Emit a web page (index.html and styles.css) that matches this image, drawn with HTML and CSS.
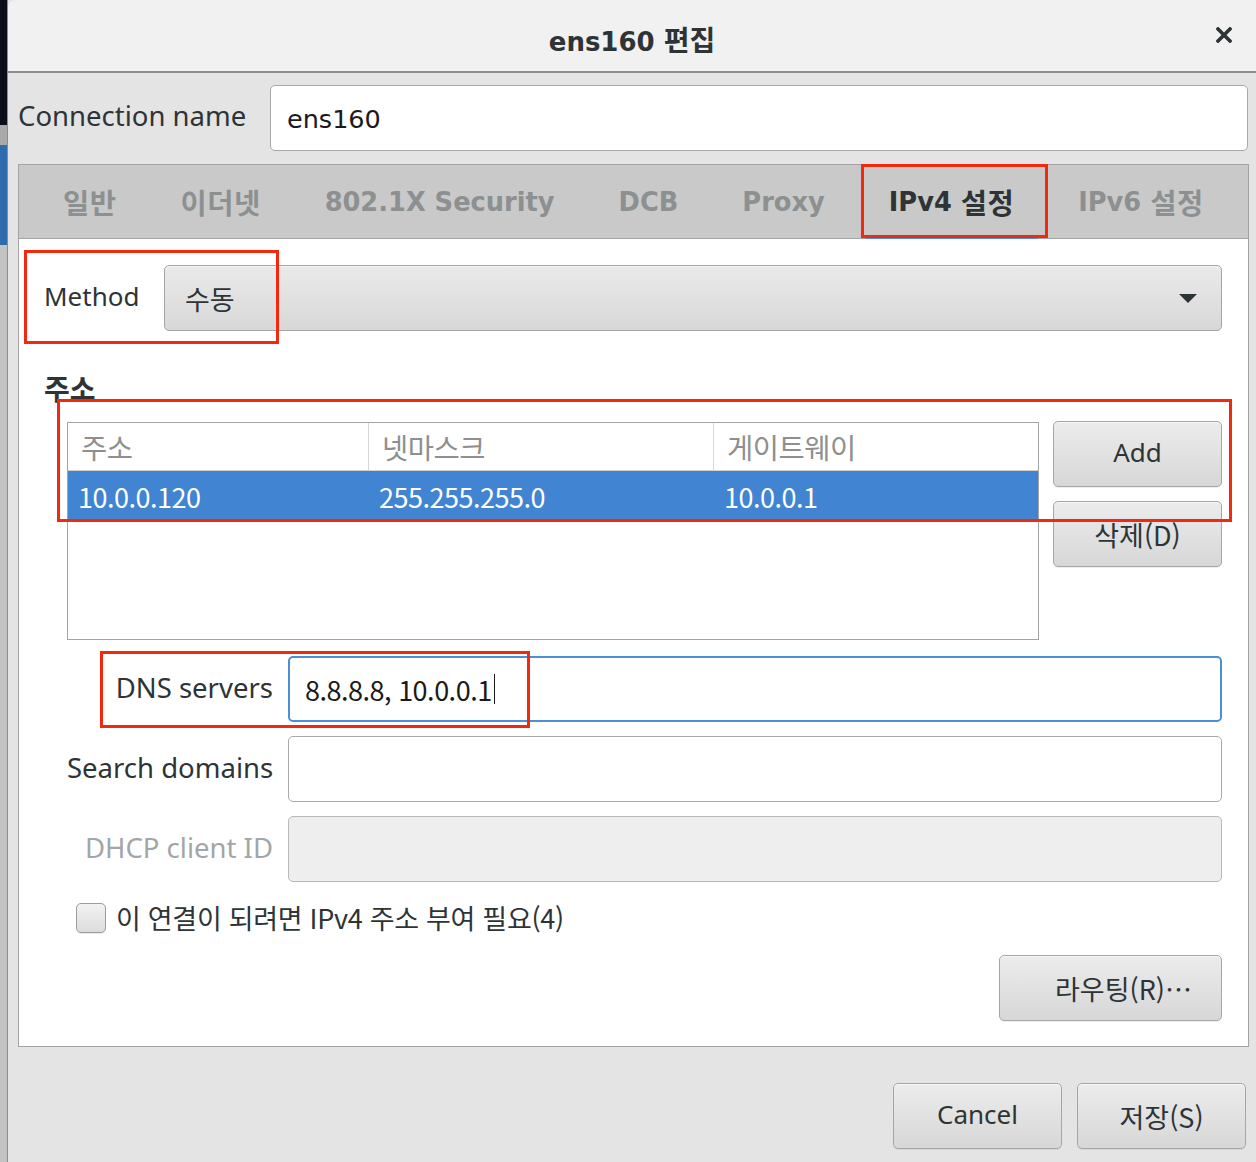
FILE: index.html
```html
<!DOCTYPE html>
<html lang="ko">
<head>
<meta charset="utf-8">
<title>ens160 편집</title>
<link rel="stylesheet" href="styles.css">
</head>
<body>
<div class="screen">
  <div class="strip">
    <div class="seg seg-dark"></div>
    <div class="seg seg-grey1"></div>
    <div class="seg seg-blue"></div>
    <div class="seg seg-grey2"></div>
  </div>
  <div class="dialog">
    <header class="titlebar">
      <span></span>
      <span class="title">ens160 <span class="title-kr">편집</span></span>
      <span class="close">
        <svg width="16" height="16" viewBox="0 0 16 16"><path d="M2 2 L14 14 M14 2 L2 14" stroke="#2e3436" stroke-width="3.6" stroke-linecap="square"/></svg>
      </span>
    </header>
    <div class="dialog-body">
      <div class="conn-row">
        <span class="label">Connection name</span>
        <div class="entry entry-name">ens160</div>
      </div>
      <div class="notebook">
        <div class="tabs">
          <span class="tab"><span class="h">일반</span></span>
          <span class="tab"><span class="h">이더넷</span></span>
          <span class="tab">802.1X Security</span>
          <span class="tab">DCB</span>
          <span class="tab">Proxy</span>
          <span class="tab tab-active">IPv4&nbsp;<span class="h">설정</span></span>
          <span class="tab">IPv6&nbsp;<span class="h">설정</span></span>
        </div>
        <div class="page">
          <div class="method-row">
            <span class="label method-label">Method</span>
            <div class="combo">
              <span class="kr">수동</span>
              <span class="arrow"></span>
            </div>
          </div>
          <div class="section-title">주소</div>
          <div class="addr-area">
            <div class="tree">
              <div class="tree-row tree-head">
                <span class="cell c1">주소</span>
                <span class="cell c2">넷마스크</span>
                <span class="cell c3">게이트웨이</span>
              </div>
              <div class="tree-row tree-sel">
                <span class="cell c1">10.0.0.120</span>
                <span class="cell c2">255.255.255.0</span>
                <span class="cell c3">10.0.0.1</span>
              </div>
            </div>
            <div class="addr-buttons">
              <button class="btn">Add</button>
              <button class="btn kr">삭제(D)</button>
            </div>
          </div>
          <div class="form-grid">
            <span class="label flabel">DNS servers</span>
            <div class="entry entry-focus"><span class="kr dns-text">8.8.8.8, 10.0.0.1</span><span class="cursor"></span></div>
            <span class="label flabel">Search domains</span>
            <div class="entry"></div>
            <span class="label flabel disabled">DHCP client ID</span>
            <div class="entry entry-disabled"></div>
          </div>
          <div class="check-row">
            <span class="checkbox"></span>
            <span class="kr check-label">이 연결이 되려면 IPv4 주소 부여 필요(4)</span>
          </div>
          <div class="routes-row">
            <button class="btn btn-routes kr">라우팅(R)…</button>
          </div>
        </div>
      </div>
      <div class="actions">
        <button class="btn">Cancel</button>
        <button class="btn kr">저장(S)</button>
      </div>
    </div>
  </div>

  <div class="mark mark-tab"></div>
  <div class="mark mark-method"></div>
  <div class="mark mark-table"></div>
  <div class="mark mark-dns"></div>
</div>
</body>
</html>
```

FILE: styles.css
```css
* { box-sizing: border-box; }

html, body {
  margin: 0;
  padding: 0;
  width: 1256px;
  height: 1162px;
  overflow: hidden;
  background: #e4e4e4;
  font-family: "Noto Sans", "Noto Sans CJK KR", sans-serif;
  color: #2e3436;
}

.screen {
  position: relative;
  display: flex;
  width: 1256px;
  height: 1162px;
}

/* desktop strip on the left */
.strip {
  width: 8px;
  display: flex;
  flex-direction: column;
  border-right: 1px solid #8d8d8d;
}
.seg-dark { height: 125px; background: #0b0e1a; }
.seg-grey1 { height: 20px; background: #a9a9a9; }
.seg-blue { height: 100px; background: #2f6cae; }
.seg-grey2 { flex: 1; background: #c3c3c3; }

/* dialog */
.dialog {
  flex: 1;
  display: flex;
  flex-direction: column;
  background: #e4e4e4;
  border-top-left-radius: 8px;
  overflow: hidden;
}

.titlebar {
  height: 73px;
  background: #f1f1f1;
  border-bottom: 2px solid #8c8c8c;
  display: grid;
  grid-template-columns: 1fr auto 1fr;
  align-items: center;
  padding-top: 6px;
}
.title {
  font-family: "DejaVu Sans", "Noto Sans CJK KR", sans-serif;
  font-weight: bold;
  font-size: 26px;
  color: #2e3436;
  white-space: nowrap;
}
.title-kr {
  font-family: "Noto Sans CJK KR", sans-serif;
  font-size: 28px;
}
.close {
  justify-self: end;
  margin-right: 24px;
  display: flex;
  margin-top: -8px;
}

.dialog-body {
  flex: 1;
  display: flex;
  flex-direction: column;
  padding: 0 7px 0 10px;
}

.label {
  font-family: "Noto Sans", "Noto Sans CJK KR", sans-serif;
  font-size: 27.5px;
  color: #2e3436;
  white-space: nowrap;
}
.kr {
  font-family: "Noto Sans CJK KR", sans-serif;
}

.conn-row {
  margin-top: 12px;
  display: flex;
  align-items: center;
  height: 66px;
}
.conn-row .label {
  width: 252px;
  margin-top: -6px;
}

.entry {
  height: 66px;
  background: #ffffff;
  border: 1px solid #a9a9a9;
  border-radius: 5px;
  display: flex;
  align-items: center;
}
.entry-name {
  flex: 1;
  margin-right: 1px;
  padding-left: 16px;
  font-family: "DejaVu Sans", sans-serif;
  font-size: 25.5px;
  color: #1a1a1a;
  padding-top: 2px;
}

/* notebook */
.notebook {
  margin-top: 13px;
  border: 1px solid #a4a4a4;
  display: flex;
  flex-direction: column;
}
.tabs {
  height: 74px;
  background: #c9c9c9;
  border-bottom: 1px solid #a4a4a4;
  display: flex;
  align-items: stretch;
  padding-left: 12px;
}
.tab {
  position: relative;
  padding: 0 32px;
  display: flex;
  align-items: center;
  font-family: "DejaVu Sans", "Noto Sans CJK KR", sans-serif;
  font-weight: bold;
  font-size: 25.7px;
  color: #8d9091;
  white-space: nowrap;
}
.tab .h {
  font-family: "Noto Sans CJK KR", sans-serif;
  font-size: 28.5px;
  font-weight: bold;
  letter-spacing: 0.5px;
}
.tab-active {
  color: #2e3436;
}
.tab-active::after {
  content: "";
  position: absolute;
  left: 8px;
  right: 8px;
  bottom: -1px;
  height: 4px;
  background: #4a8fd8;
}

.page {
  background: #ffffff;
  padding: 26px 26px 25px 25px;
  display: flex;
  flex-direction: column;
}

.method-row {
  display: flex;
  align-items: center;
  height: 66px;
}
.method-label {
  width: 120px;
  margin-top: -4px;
  font-size: 26px;
}
.combo {
  flex: 1;
  height: 66px;
  border: 1px solid #a5a5a5;
  border-radius: 5px;
  background: linear-gradient(#eaeaea, #d8d8d8);
  box-shadow: inset 0 1px 0 #f6f6f6;
  display: flex;
  align-items: center;
  justify-content: space-between;
  padding: 0 24px 0 20px;
  font-size: 27px;
  color: #2e3436;
}
.arrow {
  width: 0;
  height: 0;
  border-left: 9px solid transparent;
  border-right: 9px solid transparent;
  border-top: 9px solid #2e3436;
}

.section-title {
  margin-top: 42px;
  height: 30px;
  line-height: 30px;
  font-family: "Noto Sans CJK KR", sans-serif;
  font-weight: bold;
  font-size: 28px;
  color: #2e3436;
}

.addr-area {
  margin-top: 19px;
  margin-left: 23px;
  display: flex;
  gap: 14px;
  align-items: flex-start;
}
.tree {
  flex: 1;
  height: 218px;
  border: 1px solid #a4a4a4;
  background: #ffffff;
  font-family: "Noto Sans CJK KR", sans-serif;
  font-size: 27px;
}
.tree-row {
  display: flex;
}
.tree-head {
  height: 48px;
  border-bottom: 1px solid #cfcfcf;
  color: #8f8f8f;
  font-size: 28.5px;
}
.tree-head .cell {
  padding-left: 13px;
}
.tree-head .c1, .tree-head .c2 {
  border-right: 1px solid #d8d8d8;
}
.cell {
  display: flex;
  align-items: center;
  padding-left: 10px;
  white-space: nowrap;
  letter-spacing: -0.5px;
}
.c1 { width: 301px; }
.c2 { width: 345px; }
.c3 { flex: 1; }
.tree-sel {
  height: 51px;
  background: #4084d2;
  color: #ffffff;
}

.addr-buttons {
  width: 169px;
  display: flex;
  flex-direction: column;
  gap: 14px;
  margin-top: -1px;
}

.btn {
  height: 66px;
  border: 1px solid #a6a6a6;
  border-radius: 5px;
  background: linear-gradient(#ececec, #d7d7d7);
  box-shadow: inset 0 1px 0 #f8f8f8, 0 1px 0 rgba(0,0,0,0.06);
  font-family: "Noto Sans", "Noto Sans CJK KR", sans-serif;
  font-size: 26px;
  color: #2e3436;
  padding: 0 0 4px 0;
}
.btn.kr {
  font-family: "Noto Sans CJK KR", sans-serif;
  font-size: 27px;
  padding-bottom: 0;
}

.form-grid {
  margin-top: 16px;
  margin-left: 23px;
  display: grid;
  grid-template-columns: 206px 1fr;
  column-gap: 15px;
  row-gap: 14px;
  align-items: center;
}
.flabel {
  text-align: right;
  margin-top: -4px;
}
.disabled {
  color: #a2a6a6;
}
.entry-focus {
  border: 2px solid #4a8fd8;
  padding-left: 15px;
  font-size: 27px;
  color: #1a1a1a;
}
.dns-text {
  letter-spacing: -0.5px;
}
.cursor {
  width: 1px;
  height: 30px;
  background: #1a1a1a;
  margin-left: 2px;
}
.entry-disabled {
  background: #eeeeee;
  border-color: #b9b9b9;
}

.check-row {
  margin-top: 21px;
  margin-left: 32px;
  display: flex;
  align-items: center;
  gap: 10px;
  height: 30px;
}
.checkbox {
  width: 30px;
  height: 30px;
  border: 1px solid #9c9c9c;
  border-radius: 5px;
  background: linear-gradient(#f2f2f2, #dcdcdc);
  box-shadow: 0 1px 0 rgba(0,0,0,0.08);
}
.check-label {
  font-size: 27px;
  line-height: 30px;
  color: #2e3436;
  letter-spacing: -0.3px;
}

.routes-row {
  margin-top: 22px;
  display: flex;
  justify-content: flex-end;
}
.btn-routes {
  width: 223px;
  padding-left: 26px;
}

.actions {
  flex: 1;
  display: flex;
  justify-content: flex-end;
  align-items: flex-start;
  gap: 15px;
  padding-top: 36px;
  padding-right: 3px;
}
.actions .btn {
  width: 169px;
}

/* red annotation overlays */
.mark {
  position: absolute;
  border: 3px solid #f2280f;
  pointer-events: none;
}
.mark-tab { left: 861px; top: 164px; width: 187px; height: 74px; }
.mark-method { left: 24px; top: 250px; width: 255px; height: 94px; }
.mark-table { left: 57px; top: 399px; width: 1175px; height: 123px; }
.mark-dns { left: 100px; top: 651px; width: 430px; height: 77px; }
```
